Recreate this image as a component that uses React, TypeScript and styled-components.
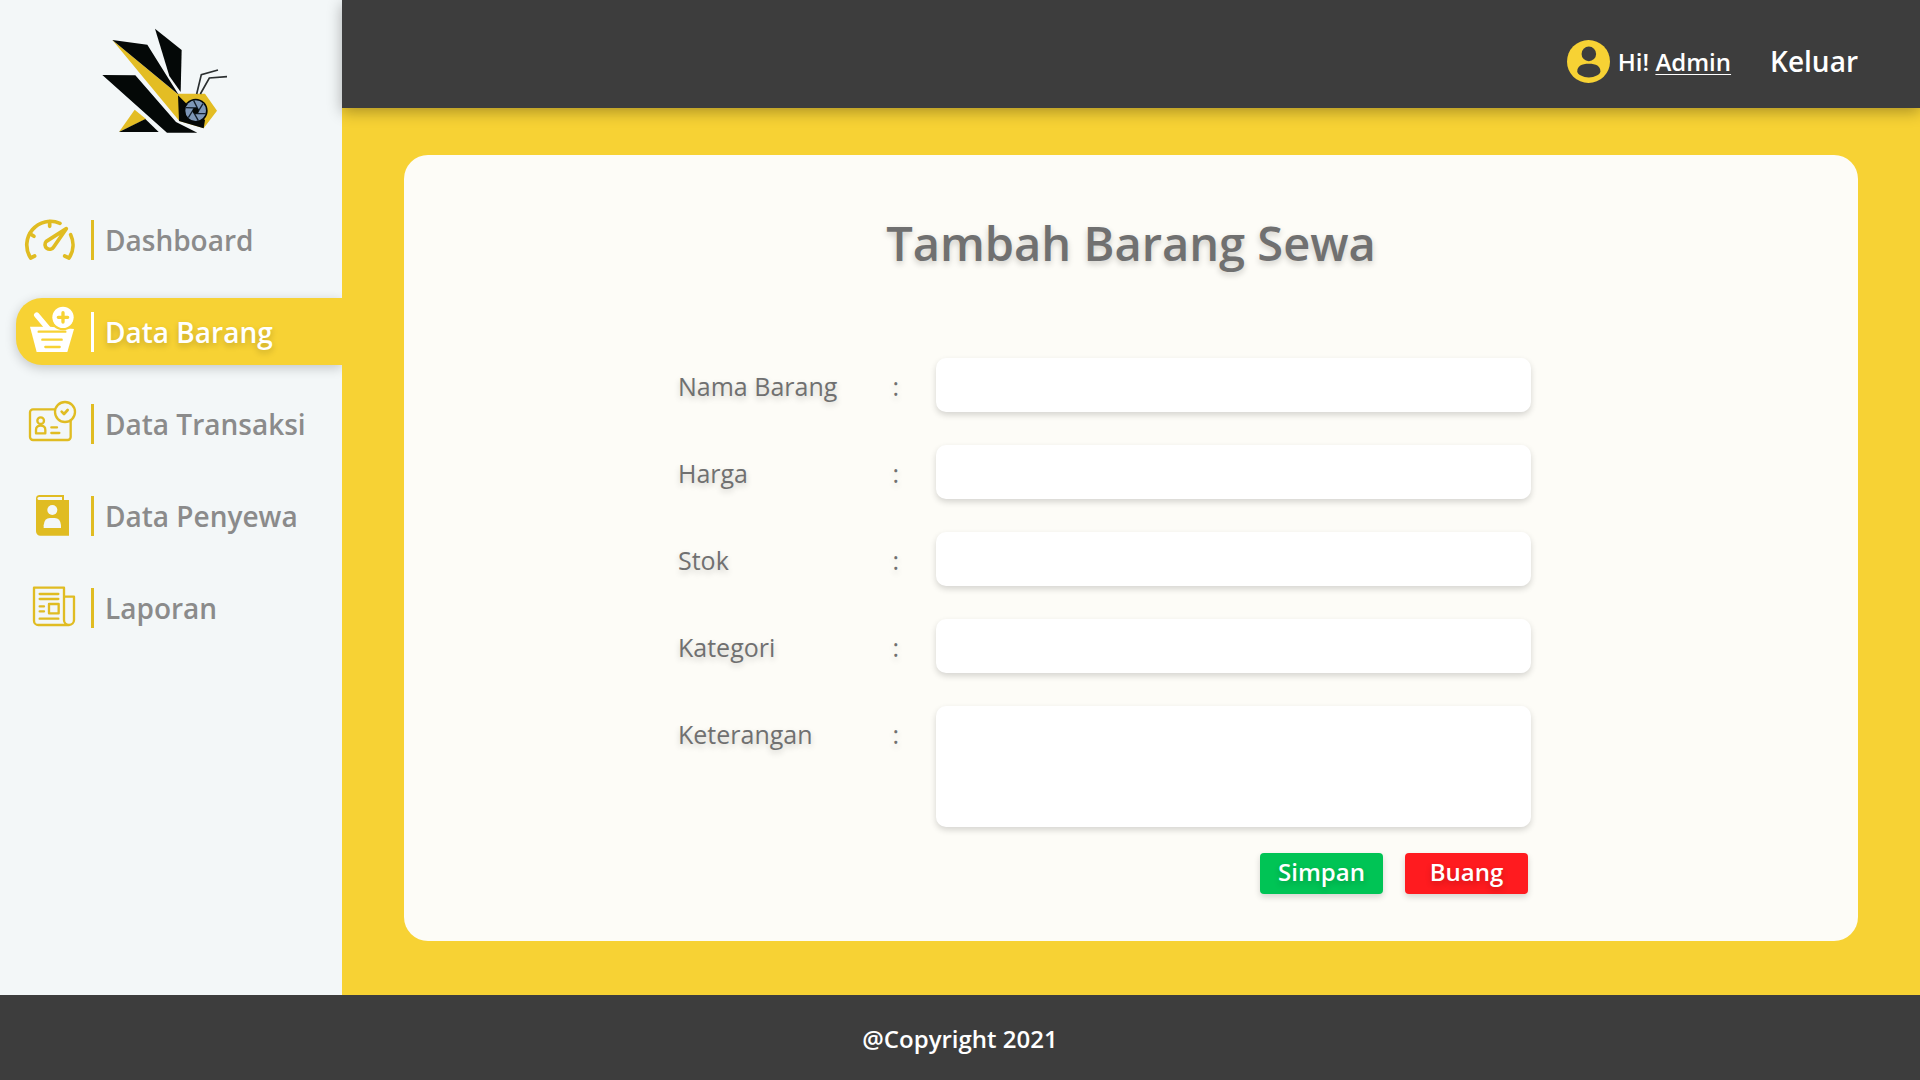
import React from "react";
import styled, { createGlobalStyle } from "styled-components";

const color = {
  yellow: "#f7d234",
  gold: "#e0bc22",
  dark: "#3d3d3d",
  pale: "#f3f7f8",
  card: "#fdfcf7",
  text: "#707070",
  muted: "#8b8b8b",
};

const GlobalStyle = createGlobalStyle`
  *, *::before, *::after { box-sizing: border-box; }
  body {
    margin: 0;
    font-family: "Open Sans", "Noto Sans", sans-serif;
    color: ${color.text};
  }
  button, input, textarea { font: inherit; border: 0; }
  a { color: inherit; text-decoration: none; }
`;

const Page = styled.div`
  min-height: 100vh;
  display: grid;
  grid-template-columns: 342px 1fr;
  grid-template-rows: 1fr auto;
`;

const Sidebar = styled.aside`
  overflow: hidden;
  background: ${color.pale};
  padding: 20px 0 20px 16px;
`;

const LogoLink = styled.a`
  display: block;
  width: 150px;
  height: 120px;
  margin: 0 0 66px 74px;
`;

const NavList = styled.ul`
  list-style: none;
  margin: 0;
  padding: 0;
  display: grid;
  gap: 25px;
`;

const NavLink = styled.a<{ $active?: boolean }>`
  display: flex;
  align-items: center;
  height: 67px;
  border-radius: 26px 0 0 26px;
  font-size: 28px;
  font-weight: 600;
  color: ${(p) => (p.$active ? "#fff" : color.muted)};
  background: ${(p) => (p.$active ? color.yellow : "transparent")};
  box-shadow: ${(p) => (p.$active ? "0 3px 12px rgba(0, 0, 0, 0.2)" : "none")};
  text-shadow: ${(p) => (p.$active ? "0 3px 6px rgba(0, 0, 0, 0.2)" : "none")};

  &::before {
    content: "";
    order: 1;
    width: 3px;
    height: 40px;
    margin: 0 11px;
    background: ${(p) => (p.$active ? "#fff" : color.gold)};
  }
  svg { order: 0; }
  span { order: 2; }
`;

const NavIcon = styled.svg`
  width: 64px;
  height: 67px;
  flex: none;
  fill: none;
  stroke: ${color.gold};
  stroke-width: 7;
  stroke-linecap: round;
  stroke-linejoin: round;
`;

const Content = styled.div`
  display: flex;
  flex-direction: column;
  background: ${color.yellow};
`;

const TopBar = styled.header`
  display: flex;
  align-items: center;
  justify-content: flex-end;
  gap: 39px;
  min-height: 108px;
  padding: 14px 62px 0;
  background: ${color.dark};
  color: #fff;
  font-weight: 600;
  box-shadow: 0 4px 14px rgba(0, 0, 0, 0.3);
`;

const User = styled.div`
  display: flex;
  align-items: center;
  gap: 8px;
  font-size: 24px;

  a { text-decoration: underline; text-decoration-thickness: 1px; text-underline-offset: 3px; }
  svg { width: 43px; height: 43px; }
`;

const Logout = styled.a`
  font-size: 28px;
`;

const Main = styled.main`
  flex: 1;
  display: flex;
  padding: 47px 62px 54px;
`;

const Card = styled.section`
  flex: 1;
  background: ${color.card};
  border-radius: 24px;
  padding: 52px 24px 47px;
`;

const Title = styled.h1`
  margin: 0 0 79px;
  font-size: 47px;
  line-height: 72px;
  font-weight: 600;
  text-align: center;
  text-shadow: 0 3px 6px rgba(0, 0, 0, 0.2);
`;

const Form = styled.form`
  max-width: 906px;
  margin: 0 auto;
  padding-right: 53px;
  display: grid;
  gap: 33px;
`;

const Field = styled.div`
  display: grid;
  grid-template-columns: 258px 1fr;
  align-items: start;
`;

const Label = styled.label`
  display: flex;
  justify-content: space-between;
  padding-right: 37px;
  font-size: 25px;
  line-height: 56px;
  height: 54px;
  text-shadow: 0 3px 6px rgba(0, 0, 0, 0.2);
`;

const Input = styled.input`
  display: block;
  width: 100%;
  height: 54px;
  padding: 0 16px;
  border-radius: 10px;
  background: #fff;
  color: ${color.text};
  font-size: 24px;
  box-shadow: 0 3px 6px rgba(0, 0, 0, 0.16);
`;

const TextArea = styled(Input)`
  height: 121px;
  padding: 12px 16px;
  resize: none;
`;

const Actions = styled.div`
  display: flex;
  justify-content: flex-end;
  gap: 22px;
  margin-top: -7px;
  padding-right: 3px;
`;

const Button = styled.button<{ $tone: string }>`
  width: 123px;
  height: 41px;
  padding: 0 0 4px;
  border-radius: 4px;
  background: ${(p) => p.$tone};
  color: #fff;
  font-size: 24px;
  line-height: 36px;
  font-weight: 600;
  text-shadow: 0 3px 6px rgba(0, 0, 0, 0.2);
  box-shadow: 0 3px 6px rgba(0, 0, 0, 0.16);
  cursor: pointer;
`;

const Footer = styled.footer`
  grid-column: 1 / -1;
  padding: 25px 24px 23px;
  background: ${color.dark};
  color: #fff;
  font-size: 24px;
  line-height: 37px;
  font-weight: 600;
  text-align: center;
`;

const Logo = () => (
  <svg viewBox="0 0 450 360" width="150" height="120" role="img" aria-label="Logo">
    <path fill="#e3bd24" d="M67 60 262 221H345L381 272 341 325 268 303Z" />
    <path fill="#040807" d="M67 60 172 74 232 170 266 224Z" />
    <path fill="#040807" d="M195 26 275 90 272 216 238 168Z" />
    <path fill="#040807" d="M37 165 136 166 258 306 322 338H231Z" />
    <path fill="#e3bd24" d="M134 269 168 297 87 336Z" />
    <path fill="#040807" d="M166 297 206 336H87Z" />
    <path fill="#040807" d="M264 226 288 250 345 300 341 325 267 303Z" />
    <circle cx="317" cy="272" r="36" fill="#040807" />
    <circle cx="317" cy="272" r="31" fill="#7d97b8" />
    <path
      fill="none"
      stroke="#15212e"
      strokeWidth="4"
      d="M326 272 311 242M321 280 339 251M313 280 347 281M308 272 325 302M313 264 295 293M321 264 287 263"
    />
    <circle cx="317" cy="272" r="9" fill="#040807" />
    <path fill="none" stroke="#2b2f30" strokeWidth="5" d="M320 222 334 164 384 150M331 222 358 174 411 170" />
  </svg>
);

const GaugeIcon = () => (
  <NavIcon viewBox="48 18 192 201" aria-hidden="true">
    <g strokeWidth="11">
      <path d="M104 168 92 174A71 71 0 0 1 180 70" />
      <path d="M212 104A71 71 0 0 1 207 174L194 168" />
      <path d="M149 65V79M90 101 102 109" />
      <path d="M199 86 161 141A14 14 0 1 1 139 124Z" />
    </g>
  </NavIcon>
);

const BasketIcon = () => (
  <NavIcon viewBox="48 294 192 201" aria-hidden="true">
    <path fill="#fff" stroke="none" d="M90 380H150L222 387 202 456H110Z" />
    <path stroke="#fff" strokeWidth="16" d="M110 345 143 384" />
    <circle cx="189" cy="352" r="39" fill={color.yellow} stroke="none" />
    <circle cx="189" cy="352" r="32" fill="#fff" stroke="none" />
    <path stroke={color.yellow} d="M116 395H196M127 419H185M136 441H179" />
    <path stroke={color.yellow} strokeWidth="10" d="M175 352H203M189 338V366" />
  </NavIcon>
);

const CardCheckIcon = () => (
  <NavIcon viewBox="48 30 192 201" aria-hidden="true">
    <rect x="90" y="88" width="122" height="92" rx="9" />
    <circle cx="195" cy="96" r="30" fill={color.pale} />
    <path strokeWidth="8" d="M185 95 192 102 203 90" />
    <circle cx="122" cy="122" r="10" />
    <path d="M108 160V150Q108 137 122 137T136 150V160Z" />
    <path d="M154 142H171M154 159H178" />
  </NavIcon>
);

const BookIcon = () => (
  <NavIcon viewBox="48 306 192 201" aria-hidden="true">
    <g stroke="none">
      <path
        fill={color.gold}
        d="M119 345H192V360H207V467H121A13 13 0 0 1 108 454V356A11 11 0 0 1 119 345Z"
      />
      <path fill={color.pale} d="M117 351H186V360H117A4 4 0 0 1 117 351Z" />
      <circle cx="157" cy="390" r="15" fill={color.pale} />
      <path fill={color.pale} d="M131 444V436Q133 414 150 414H164Q181 414 183 436V444Z" />
    </g>
  </NavIcon>
);

const NewsIcon = () => (
  <NavIcon viewBox="48 582 192 201" aria-hidden="true">
    <path d="M192 650V623H102V722A13 13 0 0 0 115 735H207A15 15 0 0 0 222 720V650H192V720A15 15 0 0 0 207 735" />
    <path d="M119 642H175M119 657H175M119 679H132M119 694H132M119 716H175" />
    <rect x="147" y="672" width="29" height="28" />
  </NavIcon>
);

const AvatarIcon = () => (
  <svg viewBox="80 59 130 130" aria-hidden="true">
    <circle cx="145" cy="124" r="65" fill={color.yellow} />
    <circle cx="146" cy="101" r="22" fill={color.dark} />
    <path
      fill={color.dark}
      d="M111 154C111 138 124 131 146 131S181 138 181 154C181 163 163 172 146 172S111 163 111 154Z"
    />
  </svg>
);

const navItems = [
  { label: "Dashboard", Icon: GaugeIcon },
  { label: "Data Barang", Icon: BasketIcon, active: true },
  { label: "Data Transaksi", Icon: CardCheckIcon },
  { label: "Data Penyewa", Icon: BookIcon },
  { label: "Laporan", Icon: NewsIcon },
];

const fields = [
  { id: "nama", label: "Nama Barang" },
  { id: "harga", label: "Harga" },
  { id: "stok", label: "Stok" },
  { id: "kategori", label: "Kategori" },
  { id: "keterangan", label: "Keterangan", multiline: true },
];

export default function App() {
  return (
    <>
      <GlobalStyle />
      <Page>
        <Sidebar>
          <LogoLink href="#">
            <Logo />
          </LogoLink>
          <nav>
            <NavList>
              {navItems.map(({ label, Icon, active }) => (
                <li key={label}>
                  <NavLink href="#" $active={active} aria-current={active ? "page" : undefined}>
                    <Icon />
                    <span>{label}</span>
                  </NavLink>
                </li>
              ))}
            </NavList>
          </nav>
        </Sidebar>
        <Content>
          <TopBar>
            <User>
              <AvatarIcon />
              <span>
                Hi! <a href="#">Admin</a>
              </span>
            </User>
            <Logout href="#">Keluar</Logout>
          </TopBar>
          <Main>
            <Card>
              <Title>Tambah Barang Sewa</Title>
              <Form onSubmit={(e) => e.preventDefault()}>
                {fields.map(({ id, label, multiline }) => (
                  <Field key={id}>
                    <Label htmlFor={id}>
                      <span>{label}</span>
                      <span>:</span>
                    </Label>
                    {multiline ? <TextArea as="textarea" id={id} /> : <Input id={id} type="text" />}
                  </Field>
                ))}
                <Actions>
                  <Button type="submit" $tone="#00c455">Simpan</Button>
                  <Button type="reset" $tone="#ff1b1f">Buang</Button>
                </Actions>
              </Form>
            </Card>
          </Main>
        </Content>
        <Footer>@Copyright 2021</Footer>
      </Page>
    </>
  );
}
